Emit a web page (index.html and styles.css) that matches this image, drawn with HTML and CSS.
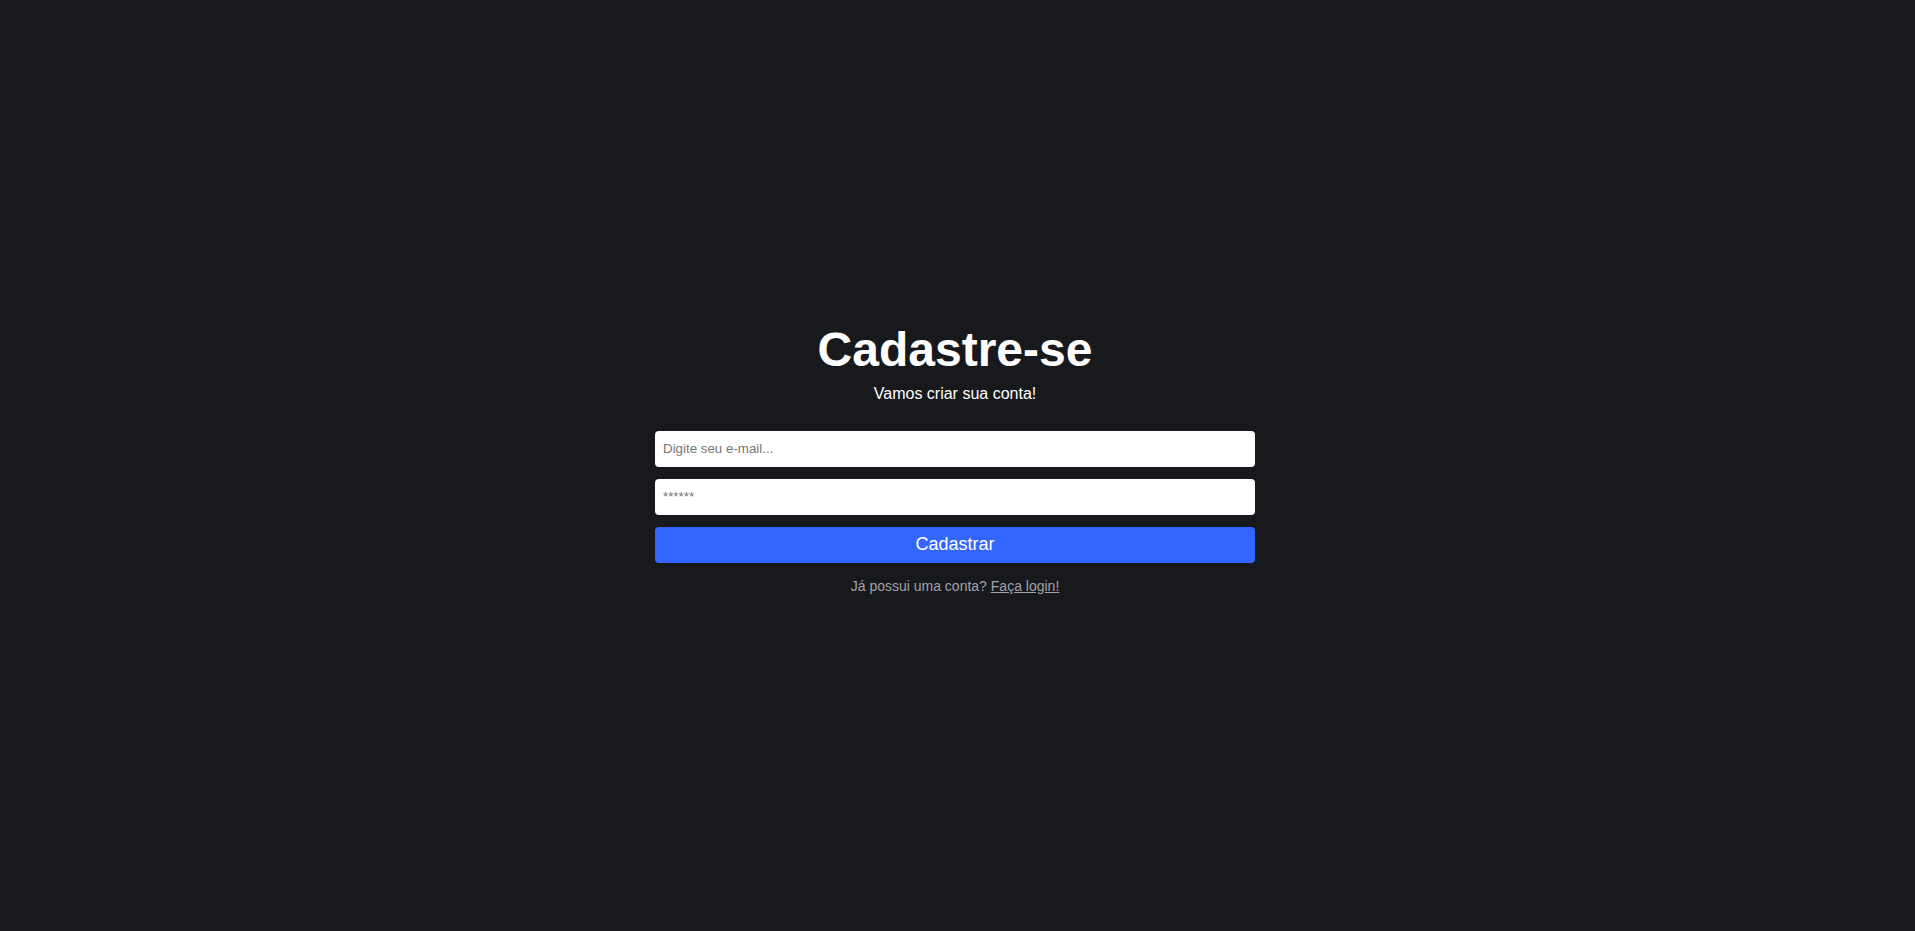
FILE: index.html
```html
<!DOCTYPE html>
<html lang="pt-BR">
<head>
<meta charset="utf-8">
<title>Cadastre-se</title>
<link rel="stylesheet" href="styles.css">
</head>
<body>
<main class="page">
  <section class="card">
    <h1 class="title">Cadastre-se</h1>
    <p class="subtitle">Vamos criar sua conta!</p>
    <form class="form">
      <input class="field" type="email" placeholder="Digite seu e-mail...">
      <input class="field" type="password" placeholder="******">
      <button class="submit" type="button">Cadastrar</button>
    </form>
    <p class="footer-text">Já possui uma conta? <a class="link" href="#">Faça login!</a></p>
  </section>
</main>
</body>
</html>
```

FILE: styles.css
```css
* { box-sizing: border-box; }
html, body { margin: 0; padding: 0; }
body {
  background: #18191d;
  font-family: "Liberation Sans", Arial, sans-serif;
  color: #ffffff;
}
.page {
  min-height: 100vh;
  display: flex;
  flex-direction: column;
  align-items: center;
  justify-content: center;
  padding-bottom: 16px;
  padding-right: 5px;
}
.card {
  width: 600px;
  display: flex;
  flex-direction: column;
  align-items: center;
}
.title {
  margin: 0;
  font-size: 48px;
  font-weight: 700;
  line-height: 55px;
  color: #ffffff;
}
.subtitle {
  margin: 8px 0 0;
  font-size: 16px;
  line-height: 18px;
  color: #ffffff;
}
.form {
  width: 100%;
  margin-top: 28px;
  display: flex;
  flex-direction: column;
  gap: 12px;
}
.field {
  height: 36px;
  width: 100%;
  border: none;
  border-radius: 4px;
  background: #ffffff;
  padding: 0 8px;
  font-family: "Liberation Sans", Arial, sans-serif;
  font-size: 13.333px;
  color: #222;
  outline: none;
}
.field::placeholder { color: #757575; }
.submit {
  height: 36px;
  width: 100%;
  border: none;
  border-radius: 4px;
  background: #3366ff;
  color: #ffffff;
  font-family: "Liberation Sans", Arial, sans-serif;
  font-size: 18px;
  cursor: pointer;
}
.footer-text {
  margin: 15px 0 0;
  font-size: 14px;
  line-height: 16px;
  color: #a1a1aa;
}
.link { color: #a1a1aa; text-decoration: underline; }
```
